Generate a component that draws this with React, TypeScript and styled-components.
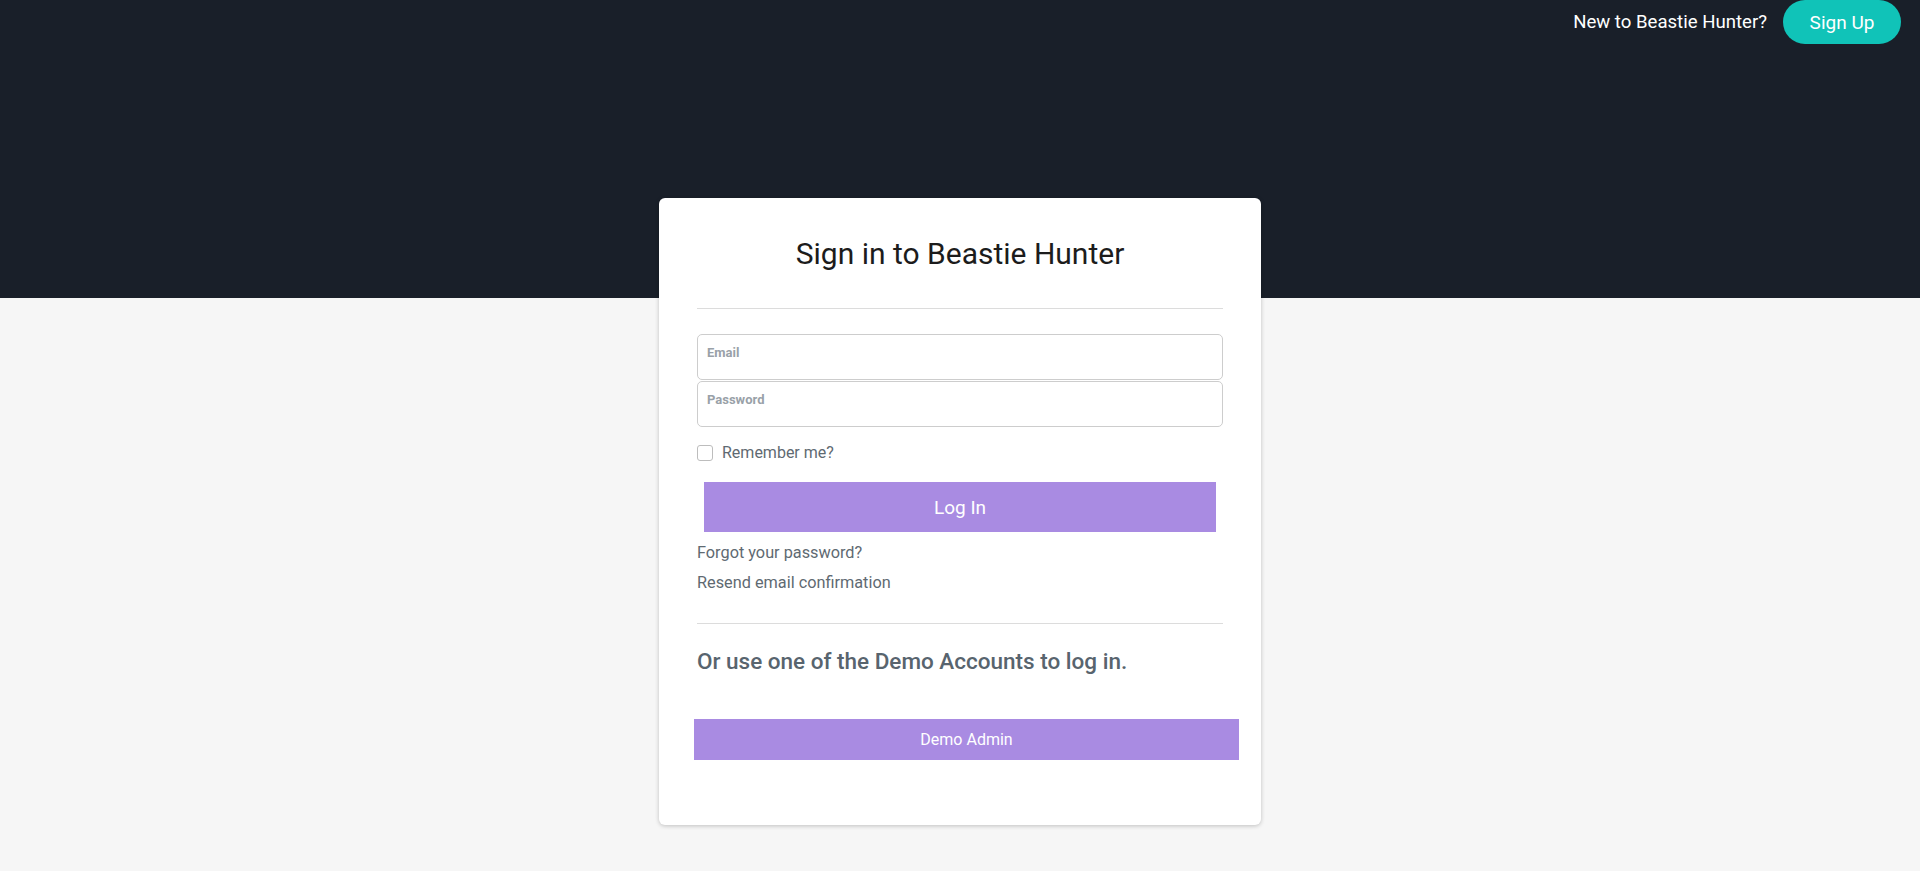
import React, { useState } from 'react';
import styled, { createGlobalStyle } from 'styled-components';

const GlobalStyle = createGlobalStyle`
  html, body {
    margin: 0;
    padding: 0;
  }
  body {
    font-family: Roboto, 'Liberation Sans', Arial, sans-serif;
    background-color: #f6f6f6;
  }
  * {
    box-sizing: border-box;
  }
`;

const Page = styled.div`
  min-height: 100vh;
  display: flex;
  flex-direction: column;
  align-items: center;
  background: linear-gradient(to bottom, #191f29 0, #191f29 298px, #f6f6f6 298px);
  padding-bottom: 46px;
`;

const Nav = styled.nav`
  align-self: stretch;
  display: flex;
  justify-content: flex-end;
  align-items: center;
  height: 44px;
  padding-right: 19px;
  gap: 16px;
`;

const NavText = styled.span`
  color: #fff;
  font-size: 18.6px;
`;

const SignUpBtn = styled.button`
  height: 44px;
  width: 118px;
  border: none;
  border-radius: 22px;
  background-color: #10c3b8;
  color: #fff;
  font-family: inherit;
  font-size: 19px;
  cursor: pointer;
`;

const Card = styled.div`
  margin-top: 154px;
  width: 602px;
  background-color: #fff;
  border-radius: 6px;
  box-shadow: 0 1px 4px rgba(0, 0, 0, 0.22);
  padding: 38px 38px 65px;
  display: flex;
  flex-direction: column;
`;

const Title = styled.h1`
  margin: 0;
  text-align: center;
  font-size: 30px;
  font-weight: 400;
  line-height: 36px;
  color: #1c1c1c;
`;

const Divider = styled.hr<{ $top: number }>`
  margin: ${(p) => p.$top}px 0 0;
  border: none;
  border-top: 1px solid #dcdcdc;
  height: 0;
`;

const Fields = styled.div`
  margin-top: 25px;
  display: flex;
  flex-direction: column;
  gap: 1px;
`;

const Field = styled.label`
  display: block;
  height: 46px;
  border: 1px solid #cdcdcd;
  border-radius: 5px;
  padding: 10px 9px 0;
`;

const FieldLabel = styled.span`
  display: block;
  font-size: 13px;
  font-weight: 700;
  color: #99a1a8;
  line-height: 16px;
`;

const FieldInput = styled.input`
  display: block;
  width: 100%;
  border: none;
  outline: none;
  padding: 0;
  font-family: inherit;
  font-size: 14px;
  background: transparent;
`;

const CheckRow = styled.label`
  margin-top: 18px;
  display: flex;
  align-items: center;
  gap: 9px;
  font-size: 16px;
  color: #5f6a72;
  line-height: 16px;
  cursor: pointer;
`;

const Box = styled.span<{ $on: boolean }>`
  width: 16px;
  height: 16px;
  border: 1px solid #bdbdbd;
  border-radius: 3px;
  background-color: ${(p) => (p.$on ? '#a98be2' : '#fff')};
`;

const PurpleBtn = styled.button<{ $big?: boolean }>`
  border: none;
  background-color: #a98be2;
  color: #fff;
  font-family: inherit;
  cursor: pointer;
  font-size: ${(p) => (p.$big ? '19px' : '16px')};
  height: ${(p) => (p.$big ? '50px' : '41px')};
`;

const LoginBtn = styled(PurpleBtn)`
  margin: 21px 7px 0 7px;
`;

const DemoBtn = styled(PurpleBtn)`
  margin: 44px -16px 0 -3px;
`;

const TextLink = styled.a<{ $top: number }>`
  margin-top: ${(p) => p.$top}px;
  font-size: 16.3px;
  line-height: 24px;
  color: #5f6a72;
  text-decoration: none;
  cursor: pointer;
`;

const DemoHeading = styled.h2`
  margin: 23px 0 0;
  font-size: 22.5px;
  font-weight: 500;
  line-height: 28px;
  color: #58646e;
`;

const App = () => {
  const [remember, setRemember] = useState(false);
  return (
    <>
      <GlobalStyle />
      <Page>
        <Nav>
          <NavText>New to Beastie Hunter?</NavText>
          <SignUpBtn>Sign Up</SignUpBtn>
        </Nav>
        <Card>
          <Title>Sign in to Beastie Hunter</Title>
          <Divider $top={36} />
          <Fields>
            <Field>
              <FieldLabel>Email</FieldLabel>
              <FieldInput type="email" />
            </Field>
            <Field>
              <FieldLabel>Password</FieldLabel>
              <FieldInput type="password" />
            </Field>
          </Fields>
          <CheckRow onClick={() => setRemember(!remember)}>
            <Box $on={remember} />
            Remember me?
          </CheckRow>
          <LoginBtn $big>Log In</LoginBtn>
          <TextLink $top={9}>Forgot your password?</TextLink>
          <TextLink $top={6}>Resend email confirmation</TextLink>
          <Divider $top={28} />
          <DemoHeading>Or use one of the Demo Accounts to log in.</DemoHeading>
          <DemoBtn>Demo Admin</DemoBtn>
        </Card>
      </Page>
    </>
  );
};

export default App;
